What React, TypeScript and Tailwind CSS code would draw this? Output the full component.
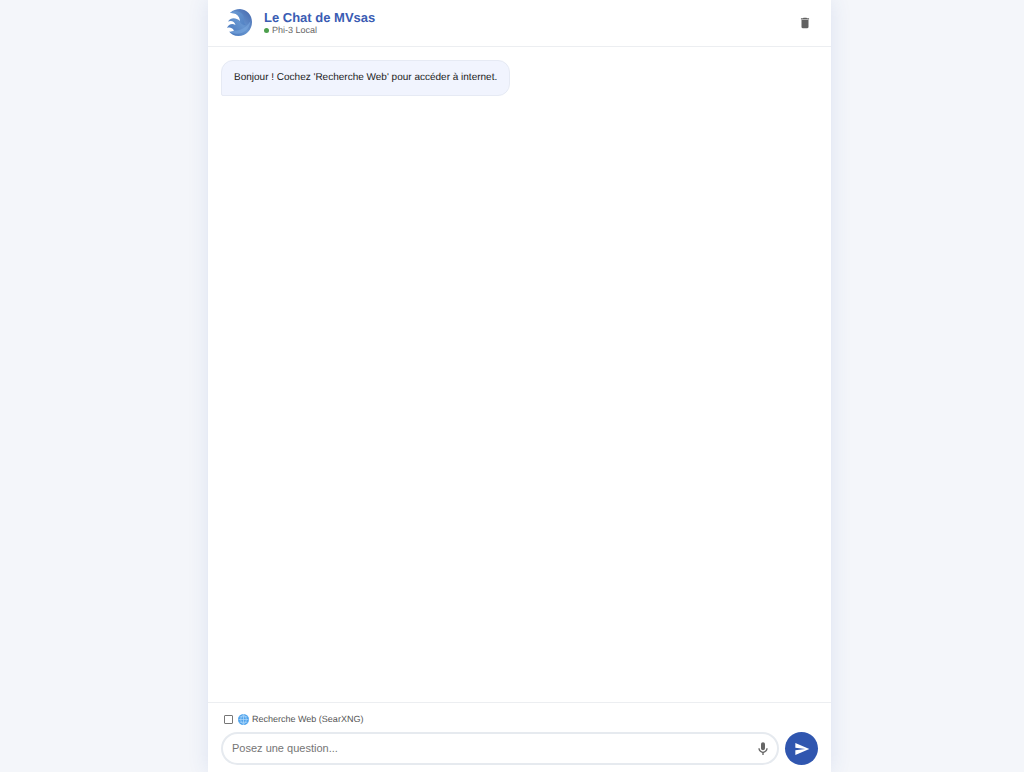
import { useState } from "react"

function WaveLogo() {
  return (
    <svg viewBox="0 0 36 36" className="size-9" aria-hidden="true">
      <defs>
        <linearGradient id="wave" x1="0" y1="1" x2="1" y2="0">
          <stop offset="0" stopColor="#4573b9" />
          <stop offset="0.5" stopColor="#6695d0" />
          <stop offset="1" stopColor="#4363a9" />
        </linearGradient>
        <linearGradient id="crest" x1="0" y1="0" x2="1" y2="1">
          <stop offset="0" stopColor="#6f9fd6" />
          <stop offset="1" stopColor="#4f7fc2" />
        </linearGradient>
      </defs>
      <path
        d="M9 8C12 5 15 4 19 4C26 4.500 31 10 31 17C31 25 25 31 17.500 31C13 31 10 29 8 26.500C10 27 12 26.500 13 25.500C11 22.500 8.500 22 6 23C7.500 19.500 11 18 14.500 20C13.500 16.500 10.500 15 7 16.500C10 12 15 12.500 19 16C19 11 15 7.500 9 8Z"
        fill="url(#wave)"
      />
      <path d="M9 8C13 5 20 6 22 10C24 14 22 18 25 20C21 20 19 18 19 16C19 11 15 7.500 9 8Z" fill="url(#crest)" opacity="0.8" />
      <path d="M13 25.500C19 26 25 23 29.500 16C29 25 21 30 13 28.500C11.500 28.200 10 27.500 9 26.800C11 27 12 26.500 13 25.500Z" fill="#79a9df" opacity="0.6" />
    </svg>
  )
}

function TrashIcon() {
  return (
    <svg viewBox="0 0 24 24" className="size-[14px]" fill="#616161" aria-hidden="true">
      <path d="M6 19c0 1.100.9 2 2 2h8c1.100 0 2-.9 2-2V7H6v12zM19 4h-3.500l-1-1h-5l-1 1H5v2h14V4z" />
    </svg>
  )
}

function MicIcon() {
  return (
    <svg viewBox="0 0 24 24" className="size-4" fill="#666" aria-hidden="true">
      <path d="M12 14c1.660 0 3-1.340 3-3V5c0-1.660-1.340-3-3-3S9 3.340 9 5v6c0 1.660 1.340 3 3 3z" />
      <path d="M17 11c0 2.760-2.240 5-5 5s-5-2.240-5-5H5c0 3.530 2.610 6.430 6 6.920V21h2v-3.080c3.390-.49 6-3.390 6-6.920h-2z" />
    </svg>
  )
}

function SendIcon() {
  return (
    <svg viewBox="0 0 24 24" className="size-4" fill="#fff" aria-hidden="true">
      <path d="M2.010 21L23 12 2.010 3 2 10l15 2-15 2z" />
    </svg>
  )
}

function GlobeIcon() {
  return (
    <svg viewBox="0 0 24 24" className="size-[11px] shrink-0" aria-hidden="true">
      <circle cx="12" cy="12" r="12" fill="#4fa3ec" />
      <path
        d="M12 1v22M1 12h22M3.500 6h17M3.500 18h17M12 1C4 6 4 18 12 23M12 1c8 5 8 17 0 22"
        fill="none"
        stroke="#b4dafa"
        strokeWidth="1.500"
      />
    </svg>
  )
}

export default function App() {
  const [messages, setMessages] = useState(["Bonjour ! Cochez 'Recherche Web' pour accéder à internet."])
  const [question, setQuestion] = useState("")

  return (
    <div className="h-screen bg-[#f4f6fa] pl-[15px] font-['Liberation_Sans',Arial,sans-serif] [text-rendering:geometricPrecision]">
      <div className="mx-auto flex h-full max-w-[623px] flex-col bg-white shadow-[0_0_20px_rgba(48,86,175,0.12)]">
        <header className="flex items-center justify-between border-b border-[#eceef1] px-[13px] py-[5px]">
          <div className="flex items-center gap-[7px]">
            <WaveLogo />
            <div>
              <h1 className="text-[13px] leading-[14px] font-bold text-[#3a5cb3]">Le Chat de MVsas</h1>
              <p className="flex items-center gap-[3px] text-[9px] leading-[10px] text-[#666]">
                <span className="size-[5px] rounded-full bg-[#4c9f4c]" />
                Phi-3 Local
              </p>
            </div>
          </div>
          <button type="button" aria-label="Effacer" className="p-[6px]" onClick={() => setMessages([])}>
            <TrashIcon />
          </button>
        </header>

        <main className="flex flex-1 flex-col items-start gap-3 overflow-y-auto p-[13px]">
          {messages.map((message, i) => (
            <div
              key={i}
              className="rounded-xl rounded-bl-[2px] border border-[#e6eaf4] bg-[#f1f4fe] px-3 py-[9px] text-[10px] leading-4 text-[#222]"
            >
              {message}
            </div>
          ))}
        </main>

        <footer className="border-t border-[#eceef1] px-[13px] pt-[10px] pb-[7px]">
          <label className="mb-[6px] ml-[3px] flex w-fit items-center gap-[3px] text-[9px] leading-[13px] text-[#555]">
            <input type="checkbox" className="mr-[2px] size-[9px] appearance-none rounded-[1px] border border-[#767676] bg-white checked:bg-[#3056af]" />
            <GlobeIcon />
            Recherche Web (SearXNG)
          </label>
          <form className="flex items-center gap-[6px]" onSubmit={(e) => e.preventDefault()}>
            <div className="flex h-[33px] flex-1 items-center rounded-full border-2 border-[#e6eaef] bg-white pr-[6px] pl-[9px]">
              <input
                type="text"
                aria-label="Question"
                placeholder="Posez une question..."
                value={question}
                onChange={(e) => setQuestion(e.target.value)}
                className="min-w-0 flex-1 bg-transparent text-[11px] text-[#222] outline-none placeholder:text-[#757575]"
              />
              <button type="button" aria-label="Dicter">
                <MicIcon />
              </button>
            </div>
            <button
              type="submit"
              aria-label="Envoyer"
              className="flex size-[33px] items-center justify-center rounded-full bg-[#3056af]"
            >
              <SendIcon />
            </button>
          </form>
        </footer>
      </div>
    </div>
  )
}
